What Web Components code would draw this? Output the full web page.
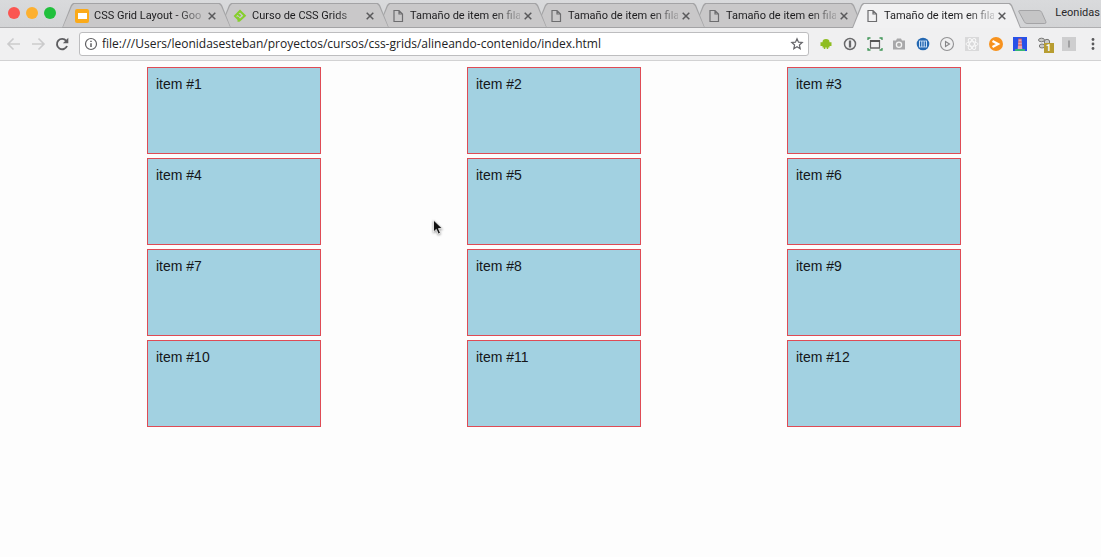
<!DOCTYPE html>
<html lang="es">
<head>
<meta charset="utf-8">
<meta name="viewport" content="width=device-width, initial-scale=1">
<title>Tamaño de item en filas</title>
<style>
  body { margin: 0; min-height: 100vh; background: #fdfdfd; color: #1c1c1e; font-family: Roboto, sans-serif; }
</style>
</head>
<body>
<browser-window>
  <tab-strip slot="tabs">
    <browser-tab icon="slides">CSS Grid Layout - Goo</browser-tab>
    <browser-tab icon="platzi">Curso de CSS Grids</browser-tab>
    <browser-tab icon="page">Tamaño de item en fila</browser-tab>
    <browser-tab icon="page">Tamaño de item en fila</browser-tab>
    <browser-tab icon="page">Tamaño de item en fila</browser-tab>
    <browser-tab icon="page" active>Tamaño de item en fila</browser-tab>
    <span slot="profile">Leonidas</span>
  </tab-strip>
  <tool-bar slot="toolbar" url="file:///Users/leonidasesteban/proyectos/cursos/css-grids/alineando-contenido/index.html"></tool-bar>
  <item-grid>
    <grid-item>item #1</grid-item><grid-item>item #2</grid-item><grid-item>item #3</grid-item>
    <grid-item>item #4</grid-item><grid-item>item #5</grid-item><grid-item>item #6</grid-item>
    <grid-item>item #7</grid-item><grid-item>item #8</grid-item><grid-item>item #9</grid-item>
    <grid-item>item #10</grid-item><grid-item>item #11</grid-item><grid-item>item #12</grid-item>
  </item-grid>
</browser-window>
<mouse-pointer></mouse-pointer>

<script>
const define = (name, html, setup) => {
  const template = document.createElement('template');
  template.innerHTML = html;
  customElements.define(name, class extends HTMLElement {
    constructor() {
      super();
      this.attachShadow({ mode: 'open' }).append(template.content.cloneNode(true));
    }
    connectedCallback() { if (setup) setup(this, this.shadowRoot); }
  });
};

const icons = {
  slides: '<rect x="1" y="1" width="14" height="14" rx="2" fill="#fbaa19"/><rect x="4" y="5" width="9" height="6" fill="#fff"/>',
  platzi: '<path d="M6.500 13.800V10.500L8 12l4.800-4.300L8 3 3 8l3.500 3.500M5.500 5.500 8.500 8.300" fill="none" stroke="#86cf2c" stroke-width="2"/>',
  page: '<path d="M4 2.500h5l3.500 3.500v7.500H4zM9 2.500V6h3.500" fill="none" stroke="#6d6d6f" stroke-width="1.200"/>',
  back: '<path d="M14 8H2.500M7.500 2.500 2 8l5.500 5.500" fill="none" stroke="#cbcbcc" stroke-width="1.600"/>',
  forward: '<path d="M2 8h11.500M8.500 2.500 14 8l-5.500 5.500" fill="none" stroke="#cbcbcc" stroke-width="1.600"/>',
  reload: '<path d="M13 10a5.200 5.200 0 1 1-.8-5.200" fill="none" stroke="#5d5d60" stroke-width="1.900"/><path d="M14.300 1.800v5.400H8.900z" fill="#5d5d60"/>',
  info: '<circle cx="8" cy="8" r="5.500" fill="none" stroke="#606063" stroke-width="1.200"/><path d="M8 7.200V11M8 4.800v1.300" stroke="#606063" stroke-width="1.500"/>',
  star: '<path d="m8 2.800 1.500 3.400 3.700.3-2.800 2.500.8 3.700L8 10.800l-3.200 1.900.8-3.700-2.800-2.500 3.700-.3z" fill="none" stroke="#66666a" stroke-width="1.200"/>',
  android: '<path d="M4.500 6.300a3.500 3.300 0 0 1 7 0h2v3.700h-2v1.500h-1.300V13H8.700v-1.500H7.300V13H5.800v-1.500H4.500V10h-2V6.300z" fill="#8fbd22"/>',
  password: '<circle cx="8" cy="8" r="5.500" fill="none" stroke="#69696b" stroke-width="1.500"/><path d="M8 4.500v7" stroke="#69696b" stroke-width="2.300"/>',
  resize: '<path d="M3.500 4v8h9V4" fill="none" stroke="#666" stroke-width="1.200"/><path d="M3 5h10" stroke="#555" stroke-width="2"/><path d="M3 12h10" stroke="#666"/><path d="M1 4V2h2.500M12.500 2H15v2M1 12v2h2.500M12.500 14H15v-2" fill="none" stroke="#3e9556" stroke-width="1.300"/>',
  camera: '<path d="M2 4.500h3l1-2h4l1 2h3v9H2z" fill="#a8a8aa"/><circle cx="8" cy="8.800" r="2.600" fill="#aaa" stroke="#f4f4f4" stroke-width="1.300"/>',
  books: '<circle cx="8" cy="8" r="6.300" fill="#2468b2"/><path d="M4.500 5v6M6.800 5v6M9.200 5v6M11.500 5v6" stroke="#cfe2f8" stroke-width="1"/><path d="M4 5h8M4 11h8" stroke="#cfe2f8" stroke-width=".8"/>',
  play: '<circle cx="8" cy="8" r="6.500" fill="none" stroke="#929294" stroke-width="1.100"/><path d="M6.500 5.500 10.500 8l-4 2.500z" fill="none" stroke="#858587" stroke-width="1.100"/>',
  react: '<rect x="1" y="1" width="14" height="14" fill="#d9d9da"/><g fill="none" stroke="#f8f8f8"><ellipse cx="8" cy="8" rx="6" ry="2.300"/><ellipse cx="8" cy="8" rx="6" ry="2.300" transform="rotate(60 8 8)"/><ellipse cx="8" cy="8" rx="6" ry="2.300" transform="rotate(120 8 8)"/></g>',
  arrow: '<circle cx="8" cy="8" r="7" fill="#f7921e"/><path d="m4.500 5 5.500 3-5.500 3" fill="none" stroke="#fff" stroke-width="2.300"/>',
  tower: '<rect x="1" y="1" width="14" height="14" fill="#2851e8"/><path d="M6.500 3h3l.8 10H5.700z" fill="#e9a7ad"/><path d="M6.300 3h3.400M6.200 6h3.600M6 9h4" stroke="#d44e58" stroke-width="1.200"/><path d="M3 14h10" stroke="#36b675" stroke-width="2"/>',
  stack: '<g fill="#c9c9c7" stroke="#777775"><ellipse cx="4.500" cy="4" rx="3" ry="1.800"/><circle cx="10" cy="6" r="2.700"/><ellipse cx="5" cy="10" rx="2.700" ry="2"/></g>',
  bar: '<rect x="1" y="1" width="14" height="14" fill="#cececf"/><path d="M8 4.500v7" stroke="#88888a" stroke-width="1.300"/>',
  menu: '<g fill="#59595b"><circle cx="8" cy="3.500" r="1.400"/><circle cx="8" cy="8" r="1.400"/><circle cx="8" cy="12.500" r="1.400"/></g>',
  close: '<path d="m4.700 4.700 6.600 6.600m0-6.600-6.600 6.600" stroke="#59595b" stroke-width="1.500"/>'
};

define('ui-icon', `<style>:host{display:block;width:16px;height:16px;flex:none}svg{display:block;width:100%;height:100%}</style><svg viewBox="0 0 16 16" aria-hidden="true"></svg>`,
  (host, root) => { root.querySelector('svg').innerHTML = icons[host.getAttribute('name')]; });

define('grid-item', `<style>
  :host{display:block;box-sizing:border-box;width:174px;height:87px;padding:8px;border:1px solid #df4b55;background:#a2d1e1;color:#151719;font:14px/16px "Liberation Sans",Arial,sans-serif}
</style><slot></slot>`);

define('item-grid', `<style>
  :host{display:block;padding:6px 0 7px 7px}
  .grid{display:grid;grid-template-columns:repeat(3,1fr);gap:4px;max-width:956px;margin:0 auto;justify-items:center}
</style><div class="grid"><slot></slot></div>`);

define('browser-window', `<style>
  :host{display:block}
  header{position:relative;z-index:0}
</style><header><slot name="tabs"></slot><slot name="toolbar"></slot></header><main><slot></slot></main>`);

define('tab-strip', `<style>
  :host{display:flex;height:28px;box-sizing:border-box;padding:3px 0 0 8px;background:linear-gradient(#d9dadc,#d2d3d5);box-shadow:inset 0 -1px #afafb1}
  .lights{display:flex;gap:6px;flex:none;width:54px;padding-top:4px}
  .lights button{width:12px;height:12px;padding:0;border:0;border-radius:50%;background:#fb5551}
  .lights .min{background:#fdb02f}.lights .max{background:#20c03c}
  nav{display:flex;flex:0 1 956px;min-width:0}
  .new{flex:none;width:29px;height:14px;margin-top:7px;padding:0;border:0;background:none}
  .new svg{display:block}
  .profile{margin-left:auto;padding:3px 1px 0 0;font-size:11px;line-height:14px;color:#29292b}
</style>
<div class="lights"><button aria-label="Cerrar"></button><button class="min" aria-label="Minimizar"></button><button class="max" aria-label="Maximizar"></button></div>
<nav><slot></slot></nav>
<button class="new" aria-label="Nueva pestaña"><svg width="29" height="14" viewBox="0 0 29 14"><path d="M1.500.5h19.500q2 0 2.800 2l4 9q.7 2-1 2H9q-2 0-2.800-2L1 2q-.7-1.500.5-1.500z" fill="#c5c5c6" stroke="#a4a4a6"/></svg></button>
<div class="profile"><slot name="profile"></slot></div>`,
  host => { host.querySelectorAll('browser-tab').forEach((tab, i) => { tab.style.zIndex = tab.hasAttribute('active') ? 20 : 10 - i; }); });

define('browser-tab', `<style>
  :host{--fill:#c9c8c9;display:flex;position:relative;flex:0 0 169px;min-width:0;box-sizing:border-box;height:25px;margin-right:-11px;padding:0 11px 0 12px;align-items:center}
  :host([active]){--fill:#f1f1f2}
  .edge,.fill{position:absolute;inset:0;z-index:-1;clip-path:polygon(0 100%,9px 2px,11px 0,calc(100% - 11px) 0,calc(100% - 9px) 2px,100% 100%)}
  .edge{background:#a3a3a5}
  .fill{inset:1px 1px;background:var(--fill)}
  :host([active]) .fill{bottom:0}
  button{padding:0;border:0;background:none;color:inherit;font:11px/16px Roboto,sans-serif}
  .tab{display:flex;flex:1;min-width:0;gap:4px;text-align:left}
  .title{flex:1;min-width:0;overflow:hidden;white-space:nowrap;-webkit-mask-image:linear-gradient(to right,#000 calc(100% - 28px),#0003);mask-image:linear-gradient(to right,#000 calc(100% - 28px),#0003)}
  .close{flex:none}
</style>
<span class="edge"></span><span class="fill"></span>
<button class="tab"><span class="title"><slot></slot></span></button>
<button class="close" aria-label="Cerrar pestaña"><ui-icon name="close"></ui-icon></button>`,
  (host, root) => {
    const icon = document.createElement('ui-icon');
    icon.setAttribute('name', host.getAttribute('icon'));
    root.querySelector('.tab').prepend(icon);
  });

define('tool-bar', `<style>
  :host{display:flex;align-items:center;box-sizing:border-box;height:33px;padding-left:6px;background:#f0f0f1;border-bottom:1px solid #d2d2d3}
  button{padding:0;border:0;background:none}
  .nav{display:flex;gap:8px;margin-right:9px}
  .address{display:flex;align-items:center;flex:1;min-width:0;box-sizing:border-box;height:24px;padding:0 3px;gap:3px;border:1px solid #bdbdbf;border-radius:3px;background:#fff}
  input{flex:1;min-width:0;height:20px;padding:0;border:0;outline:0;background:none;color:#222224;font:12px/20px "Open Sans",Roboto,sans-serif}
  .extensions{display:flex;justify-content:space-between;flex:none;width:259px;margin:0 8px 0 9px}
  .extensions button{position:relative}
  .badge{position:absolute;left:7px;top:7px;width:10px;height:10px;background:#b79d31;color:#fff;font:bold 9px/10px Roboto,sans-serif;text-align:center}
</style>
<div class="nav"><button aria-label="Atrás"><ui-icon name="back"></ui-icon></button><button aria-label="Adelante"><ui-icon name="forward"></ui-icon></button><button aria-label="Recargar"><ui-icon name="reload"></ui-icon></button></div>
<div class="address"><ui-icon name="info"></ui-icon><input type="text" aria-label="Dirección" spellcheck="false"><button aria-label="Favorito"><ui-icon name="star"></ui-icon></button></div>
<div class="extensions"></div>
<button aria-label="Menú"><ui-icon name="menu"></ui-icon></button>`,
  (host, root) => {
    root.querySelector('input').value = host.getAttribute('url');
    root.querySelector('.extensions').innerHTML = ['android','password','resize','camera','books','play','react','arrow','tower','stack','bar']
      .map(n => `<button aria-label="${n}"><ui-icon name="${n}"></ui-icon>${n === 'stack' ? '<span class="badge">1</span>' : ''}</button>`).join('');
  });

define('mouse-pointer', `<style>
  :host{position:absolute;left:432px;top:219px;pointer-events:none}
  svg{display:block;filter:drop-shadow(0 1px 1px #0006)}
</style><svg width="12" height="18" viewBox="0 0 12 18" aria-hidden="true"><path d="M1.500 1v12l2.800-2.600 2 4.700 2.200-1-2-4.500h3.900z" fill="#111" stroke="#fff" stroke-width=".8"/></svg>`);
</script>
</body>
</html>
